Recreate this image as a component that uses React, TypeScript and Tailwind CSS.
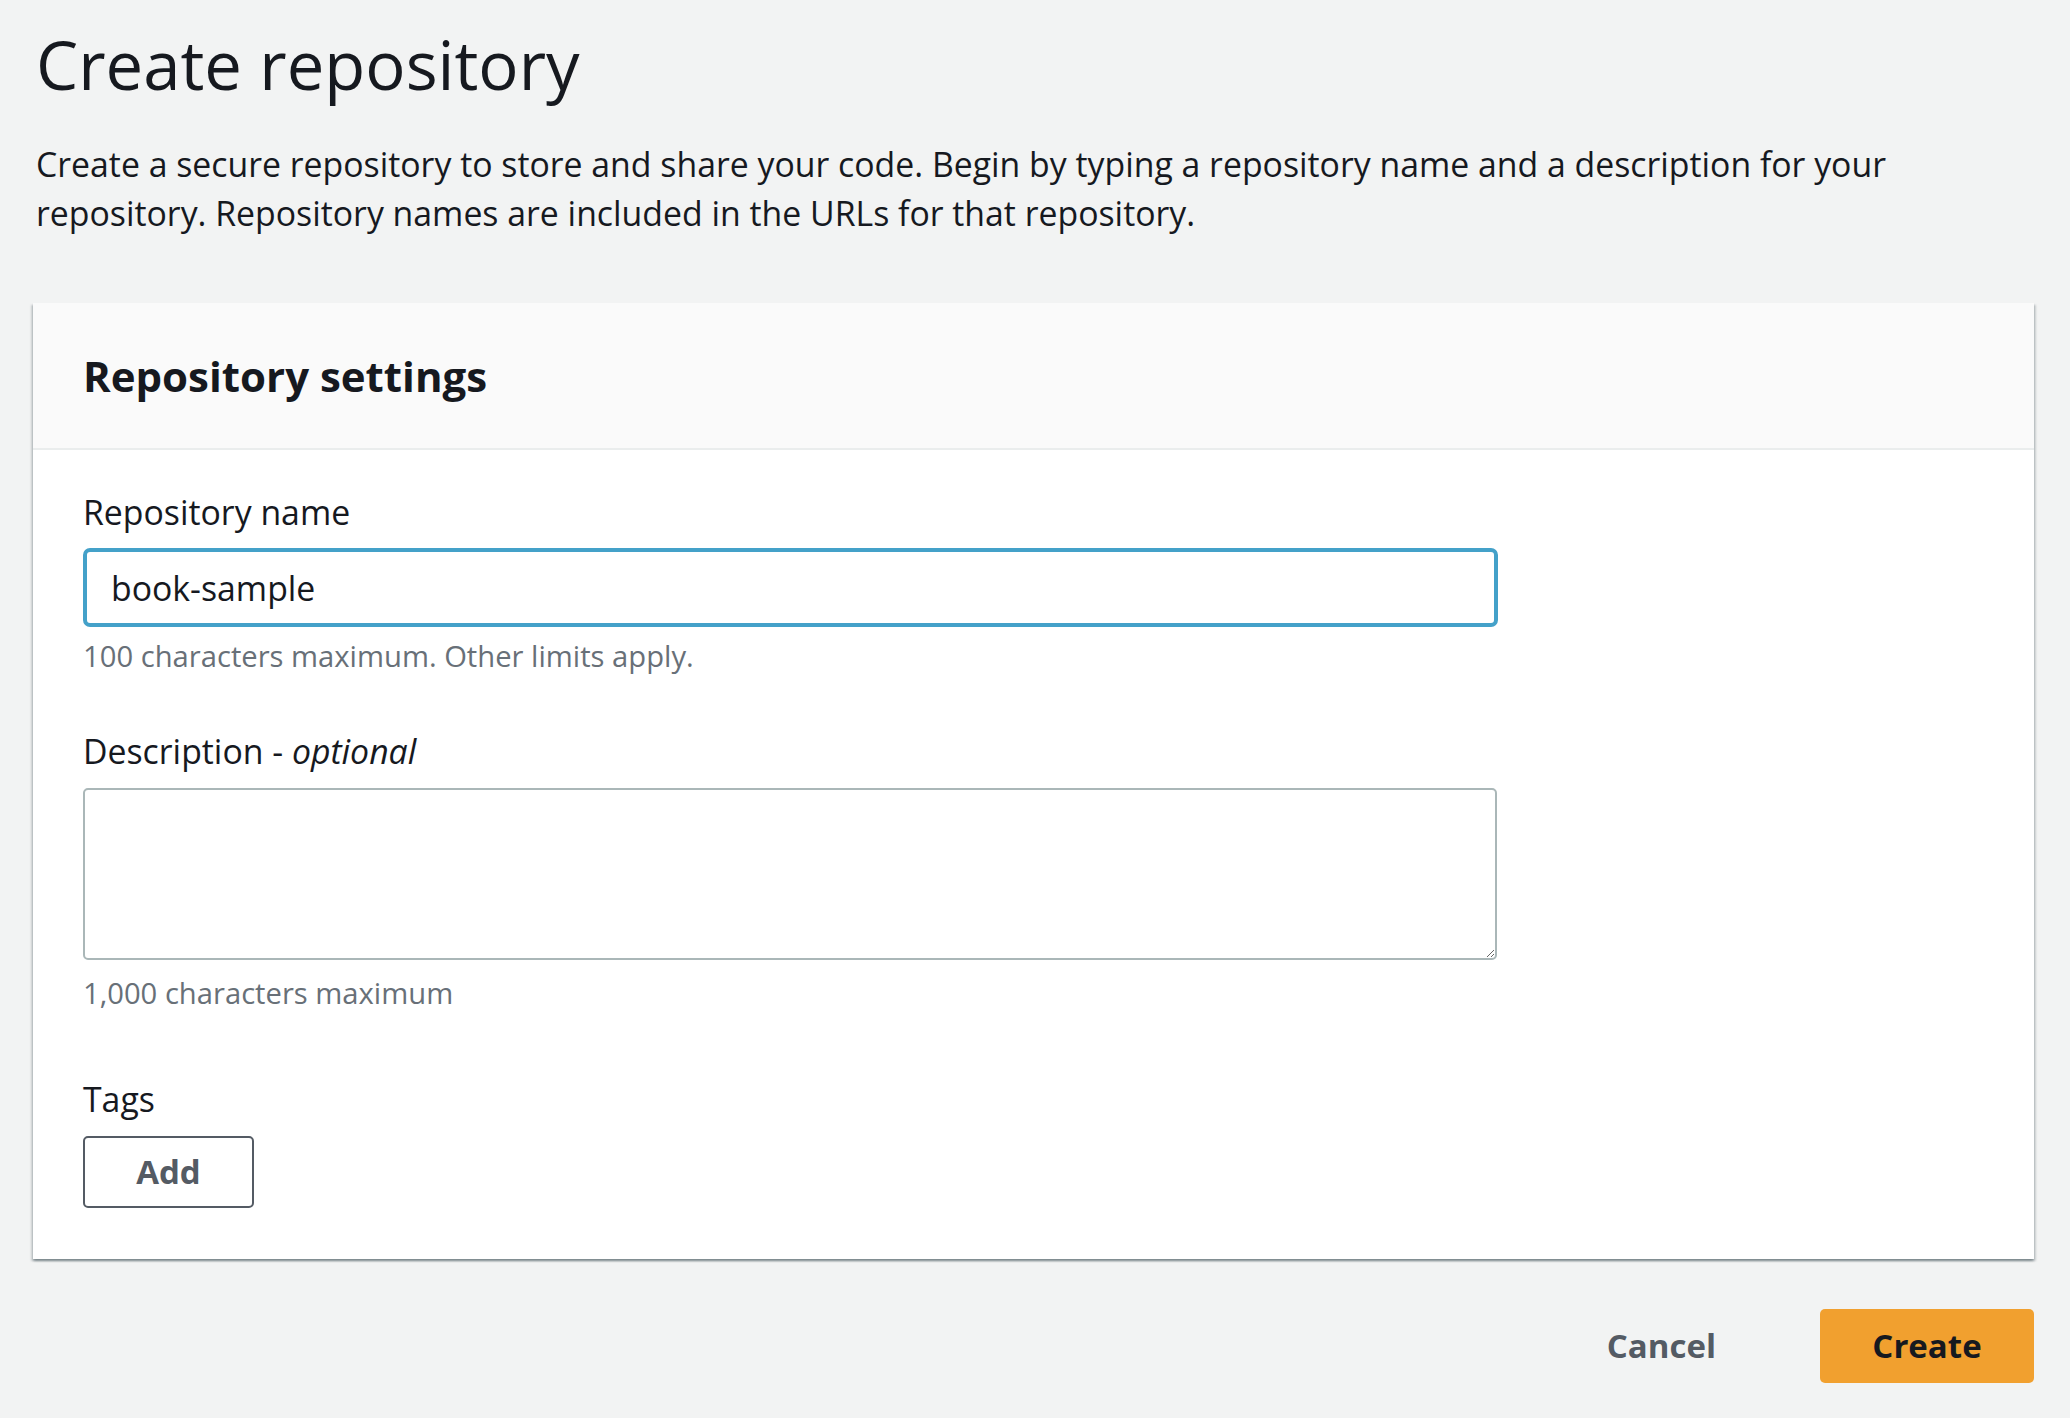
import React from 'react';

export default function App() {
  return (
    <div className="min-h-screen bg-[#f2f3f3] font-['Open_Sans',sans-serif] text-[#16191f]">
      <div className="pl-[33px] pr-[36px] pt-[24px] pb-[34px]">
        <h1 className="pl-[3px] text-[67px] leading-[80px] font-normal">Create repository</h1>
        <p className="mt-[36px] w-[1900px] pl-[3px] text-[33.8px] leading-[49px]">
          Create a secure repository to store and share your code. Begin by typing a repository name and a description for your repository. Repository names are included in the URLs for that repository.
        </p>

        {/* Settings card */}
        <div className="mt-[65px] bg-white shadow-[0_2px_2px_0_rgba(0,28,36,0.3),2px_2px_2px_0_rgba(0,28,36,0.15),-2px_2px_2px_0_rgba(0,28,36,0.15)]">
          <div className="flex h-[147px] items-center border-b-2 border-[#eaeded] bg-[#fafafa] px-[50px]">
            <h2 className="text-[42px] font-bold leading-[50px]">Repository settings</h2>
          </div>

          <div className="px-[50px] pt-[44px] pb-[51px]">
            <label className="block text-[33.8px] leading-[36px]">Repository name</label>
            <input
              defaultValue="book-sample"
              className="mt-[18px] block h-[79px] w-[1415px] rounded-[7px] border-4 border-[#44a1c9] bg-white px-[24px] text-[33.8px] text-[#16191f] outline-none"
            />
            <div className="mt-[11px] text-[29.2px] leading-[36px] text-[#687078]">
              100 characters maximum. Other limits apply.
            </div>

            <label className="mt-[59px] block text-[33.8px] leading-[36px]">
              Description - <i>optional</i>
            </label>
            <textarea className="mt-[19px] block h-[172px] w-[1414px] rounded-[5px] border-2 border-[#aab7b8] bg-white px-[24px] py-[12px] text-[33.8px] outline-none" />
            <div className="mt-[15px] text-[29.2px] leading-[36px] text-[#687078]">1,000 characters maximum</div>

            <div className="mt-[70px] text-[33.8px] leading-[36px]">Tags</div>
            <button className="mt-[19px] flex h-[72px] w-[171px] items-center justify-center rounded-[5px] border-2 border-[#545b64] bg-white text-[33px] font-bold text-[#545b64]">
              Add
            </button>
          </div>
        </div>

        {/* Footer actions */}
        <div className="mt-[50px] flex items-center justify-end gap-[104px]">
          <button className="text-[33px] font-bold text-[#545b64]">Cancel</button>
          <button className="flex h-[74px] w-[214px] items-center justify-center rounded-[5px] bg-[#f1a02f] text-[33px] font-bold text-[#16191f]">
            Create
          </button>
        </div>
      </div>
    </div>
  );
}
